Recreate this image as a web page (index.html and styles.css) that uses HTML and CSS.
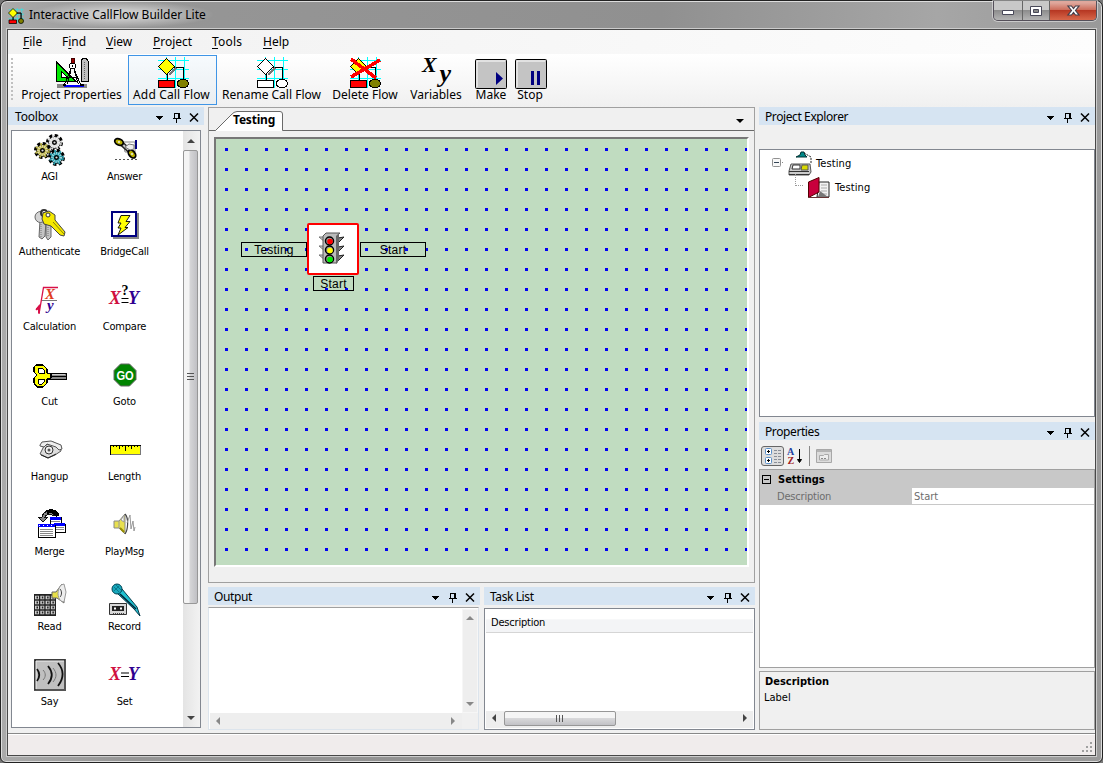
FILE: index.html
```html
<!DOCTYPE html>
<html lang="en">
<head>
<meta charset="utf-8">
<title>Interactive CallFlow Builder Lite</title>
<link rel="stylesheet" href="styles.css">
</head>
<body>
<svg class="defs" width="0" height="0">
  <symbol id="pane-tools" viewBox="0 0 46 11">
    <path d="M1 4h8l-4 4z" fill="#000"/>
    <path d="M20.500 1v5.500M20 1.500h5M24 1v5.500M25 1v5.500M18.500 6.500h8M22.500 7v4" fill="none" stroke="#000"/>
    <path d="M36 1.500l8 8M44 1.500l-8 8" stroke="#000" stroke-width="1.500" shape-rendering="auto"/>
  </symbol>
  <symbol id="gear" viewBox="0 0 16 16">
    <circle cx="8" cy="8" r="6.300" fill="none" stroke="#000" stroke-width="3.400" stroke-dasharray="2.900 2.050"/>
    <circle cx="8" cy="8" r="5.600" fill="currentColor" stroke="#000" stroke-width=".8"/>
    <circle cx="8" cy="8" r="6" fill="none" stroke="currentColor" stroke-width="2" stroke-dasharray="1.700 3.250" stroke-dashoffset="-.6"/>
    <circle cx="8" cy="8" r="4" fill="none" stroke="#fff" stroke-width="2.500" stroke-dasharray="1 1" opacity=".6"/>
    <circle cx="8" cy="8" r="1.700" fill="#ddd" stroke="#000" stroke-width="1.300"/>
  </symbol>
  <symbol id="flow-grid" viewBox="0 0 32 32">
    <path d="M9.500 0v31M18.500 0v31M27.500 0v31M1 3.500h31M1 12.500h31M1 21.500h31" stroke="#0ff" fill="none"/>
    <path d="M16 10.500h10.500v12M10.500 15v9" stroke="#000" fill="none"/>
  </symbol>
</svg>
<div class="window">
  <header class="titlebar">
    <svg class="app-icon" width="16" height="16" viewBox="0 0 32 32"><use href="#flow-grid"/><path d="M10 1l9 9-9 9-9-9z" fill="#ff0" stroke="#000" stroke-width="1.500"/><path d="M17 10h9v12M10 19v5" stroke="#000" stroke-width="2" fill="none"/><path d="M2 24h15v7H2z" fill="red" stroke="#000" stroke-width="1.500"/><circle cx="26" cy="26" r="5" fill="#808000" stroke="#000" stroke-width="1.500"/></svg>
    <span class="title-text">Interactive CallFlow Builder Lite</span>
    <div class="caption-buttons">
      <span class="cap min"><svg width="28" height="19"><path d="M8.500 9.500h11v4h-11z" fill="#fff" stroke="#484858"/></svg></span>
      <span class="cap max"><svg width="26" height="19"><path d="M7.500 5.500h11v9h-11z" fill="#fff" stroke="#484858"/><path d="M10.500 8.500h5v3h-5z" fill="#888" stroke="#484858"/></svg></span>
      <span class="cap close"><svg width="46" height="19"><path d="M18 5h3.500L23.500 7.500 25.500 5H29l-3.500 4.500L29 14h-3.500l-2-2.500-2 2.500H18l3.500-4.500z" fill="#fff" stroke="#45404c" stroke-width="1.200"/></svg></span>
    </div>
  </header>
  <div class="client">
    <nav class="menubar">
      <span class="m-file"><u>F</u>ile</span><span class="m-find">F<u>i</u>nd</span><span class="m-view"><u>V</u>iew</span><span class="m-project"><u>P</u>roject</span><span class="m-tools"><u>T</u>ools</span><span class="m-help"><u>H</u>elp</span>
    </nav>
    <div class="toolbar">
      <span class="grip"></span>
      <div class="tool t-props"><svg width="32" height="32" shape-rendering="crispEdges">
        <path d="M.500 5l19 19H.500z" fill="#00e800" stroke="#000"/><path d="M5 14l6 6H5z" fill="#fff" stroke="#000"/>
        <path d="M25 4l2-3h3l2 3v20h-7z" fill="#c0c0c0" stroke="#000"/><path d="M28.500 5v18" stroke="#666" stroke-dasharray="1 1"/>
        <path d="M15 1h3v5h-3z" fill="#900" stroke="#400"/><circle cx="16.500" cy="9" r="3" fill="#fff" stroke="#000"/><circle cx="16.500" cy="9" r="1" fill="#000"/>
        <path d="M15 12L7 31M18 12l8 19M15 13l-4 16M18 13l5 16M11 20h11" stroke="#000" fill="none"/>
        <path d="M1 28.500h30" stroke="#888" stroke-width="4"/><path d="M8 28h20" stroke="#00f" stroke-width="3"/><path d="M10 27.500h15" stroke="#fff"/><path d="M7 28h3M24 28h4" stroke="#000" stroke-width="2"/></svg><span>Project Properties</span></div>
      <div class="tool t-add selected"><svg width="32" height="32" shape-rendering="crispEdges"><use href="#flow-grid"/><path d="M12 18l7-7" stroke="#777" stroke-width="2"/><path d="M9.500 1.500l8 8-8 8-8-8z" fill="#ff0" stroke="#000"/><path d="M1.500 23.500h16v7h-16z" fill="red" stroke="#000"/><ellipse cx="26" cy="26.500" rx="5.500" ry="4.500" fill="#808000" stroke="#000"/></svg><span>Add Call Flow</span></div>
      <div class="tool t-rename"><svg width="32" height="32" shape-rendering="crispEdges"><use href="#flow-grid"/><path d="M12 18l7-7" stroke="#777" stroke-width="2"/><path d="M9.500 1.500l8 8-8 8-8-8z" fill="#fff" stroke="#000"/><path d="M1.500 23.500h16v7h-16z" fill="#fff" stroke="#000"/><ellipse cx="26" cy="26.500" rx="5.500" ry="4.500" fill="#fff" stroke="#000"/></svg><span>Rename Call Flow</span></div>
      <div class="tool t-delete"><svg width="32" height="32" shape-rendering="crispEdges"><use href="#flow-grid"/><path d="M9.500 1.500l8 8-8 8-8-8z" fill="#ff0" stroke="#000"/><path d="M1.500 23.500h16v7h-16z" fill="red" stroke="#000"/><ellipse cx="26" cy="26.500" rx="5.500" ry="4.500" fill="#808000" stroke="#000"/><path d="M2 2l25 19M31 3L2 20" stroke="red" stroke-width="3.500"/></svg><span>Delete Flow</span></div>
      <div class="tool t-vars"><svg width="32" height="32"><text class="var-glyph" x="0" y="15">X</text><text class="var-glyph big" x="17.500" y="25">y</text></svg><span>Variables</span></div>
      <div class="tool t-make"><svg width="32" height="32"><rect x=".5" y="2.500" width="31" height="29" rx="1" fill="#c4c4c4" stroke="#000"/><path d="M2 30V4h28" stroke="#fff" fill="none"/><path d="M21 15v13l7-6.500z" fill="#000080"/></svg><span>Make</span></div>
      <div class="tool t-stop"><svg width="32" height="32"><rect x=".5" y="2.500" width="31" height="29" rx="1" fill="#c4c4c4" stroke="#000"/><path d="M2 30V4h28" stroke="#fff" fill="none"/><path d="M16 14h3v14h-3zM22 14h3v14h-3z" fill="#000080"/></svg><span>Stop</span></div>
    </div>
    <main class="workspace">
      <section class="toolbox">
        <div class="pane-head"><span class="wide">Toolbox</span><svg width="46" height="11" shape-rendering="crispEdges"><use href="#pane-tools"/></svg></div>
        <div class="toolbox-list">
          <div class="items">
            <div class="item"><svg width="32" height="32"><use href="#gear" x="12" y="0" width="17" height="17" color="#d8d8d8"/><use href="#gear" x="0" y="8" width="17" height="17" color="#b8b040"/><use href="#gear" x="14" y="15" width="17" height="17" color="#209cac"/></svg><span>AGI</span></div>
            <div class="item"><svg width="32" height="32"><path d="M14 8h12v10H16z" fill="#fff" stroke="#888"/><path d="M27 6v9" stroke="#000080" stroke-width="2"/><path d="M13 10l9 8" stroke="#222" stroke-width="5"/><path d="M12 9l10 9" stroke="#c8c8c8" stroke-width="2"/><ellipse cx="10" cy="8" rx="4.500" ry="3" transform="rotate(25 10 8)" fill="#b8b000" stroke="#000" stroke-width="1.800"/><ellipse cx="23" cy="20" rx="4.500" ry="3" transform="rotate(50 23 20)" fill="#b8b000" stroke="#000" stroke-width="1.800"/><circle cx="10" cy="8" r="1" fill="#eee"/><circle cx="23" cy="20" r="1" fill="#eee"/><path d="M16 13l4-3 5 1v4l-4 1z" fill="#eee" stroke="#777"/><path d="M6 25.500h23" stroke="#555" stroke-dasharray="2 2"/></svg><span>Answer</span></div>
            <div class="item"><svg width="32" height="32"><g stroke="#666"><path d="M6 11l-1 17 3 2 3-3 1-15zM12 12v16l2 3 3-3V12z" fill="#c4c4c4"/><circle cx="6.500" cy="8" r="5.500" fill="#d4d4d4"/></g><circle cx="10" cy="4" r="3" fill="none" stroke="#333" stroke-width="2"/><path d="M9 4l6-2 6 4v5l10 12-1 4-4-1-9-9-7-2-2-5z" fill="#f4e800" stroke="#444"/><path d="M19 13l11 12" stroke="#8a8400"/><circle cx="14" cy="6" r="2" fill="#fff" stroke="#333"/><path d="M7 15v13M14 18v10" stroke="#777" stroke-dasharray="1 1"/></svg><span>Authenticate</span></div>
            <div class="item"><svg width="32" height="32"><path d="M4 4h26v26H4z" fill="#888"/><path d="M3 3h24v24H3z" fill="#fff" stroke="#000080" stroke-width="2"/><path d="M12 6.500h9l-4 6h4l-5 6h3L9 26l3-7H9l3-5H9z" fill="#ff0" stroke="#000" stroke-width=".9"/></svg><span>BridgeCall</span></div>
            <div class="item"><svg width="32" height="32"><path d="M2 26l3-4v8L9.500 3.500H24" stroke="#d81048" fill="none" stroke-width="1.300"/><path d="M2.500 25.500l2.500-2.500v6" stroke="#d81048" fill="none" stroke-width="2"/><text class="math red s16" x="11" y="14.500">X</text><path d="M8 16.500h15" stroke="#777"/><text class="math purple s16" x="13" y="26">y</text></svg><span>Calculation</span></div>
            <div class="item"><svg width="32" height="32"><text class="math crimson" x="0" y="20">X</text><path d="M12.500 14.500h7M12.500 18.500h7" stroke="#000" stroke-width="1.200"/><text class="math purple" x="19" y="20">Y</text><text class="question" x="12.500" y="11">?</text></svg><span>Compare</span></div>
            <div class="item"><svg width="32" height="32" shape-rendering="crispEdges"><path d="M14 14h18v6H14z" fill="#888" stroke="#000"/><path d="M15 15.500h16" stroke="#ccc"/><path d="M16 17.500h16" stroke="#000"/><path d="M2 6h7l4 4v4l4 1v4l-4 1v4l-4 4H3l-3-4v-5l3-3-3-3V8z" fill="#ff0" stroke="#000" stroke-width="1.200"/><path d="M5 9h3l2 2v3H5l-1-2zM5 20h5v3l-2 2H5l-1-2z" fill="#fff" stroke="#000"/></svg><span>Cut</span></div>
            <div class="item"><svg width="32" height="32"><path d="M11.500 5h9l6.500 6.500v9L20.500 27h-9L5 20.500v-9z" fill="#008400" stroke="#666"/><text class="go" x="7.500" y="20.500" textLength="17" lengthAdjust="spacingAndGlyphs">GO</text></svg><span>Goto</span></div>
            <div class="item"><svg width="32" height="32"><path d="M10 12l-4 8 8 4 7-3 6-4-1-5-7-4z" fill="#ddd" stroke="#555"/><path d="M6 11l2-3 9-1 10 4 1 4-3 1-3-3-9-3-3 3-4-1z" fill="#eee" stroke="#555"/><circle cx="15" cy="16" r="4" fill="#eee" stroke="#333"/><circle cx="15" cy="16" r="1.500" fill="#555"/><path d="M7 21l7 3 8-4" stroke="#222" fill="none"/></svg><span>Hangup</span></div>
            <div class="item"><svg width="32" height="32" shape-rendering="crispEdges"><path d="M1.500 11.500h30v9h-30z" fill="#ff0" stroke="#777"/><path d="M1.500 21V11.500h30" fill="none" stroke="#000"/><path d="M4 12.500h26" stroke="#000" stroke-dasharray="1 2"/><path d="M10.500 12v3M16.500 12v5M22.500 12v3" stroke="#000"/></svg><span>Length</span></div>
            <div class="item"><svg width="32" height="32" shape-rendering="crispEdges"><path d="M16 8h11v14H16z" fill="#fff" stroke="#000"/><path d="M16 9h11" stroke="#00f" stroke-width="3"/><path d="M20 15h11v8H20z" fill="#fff" stroke="#000"/><path d="M20 15h11" stroke="#00f" stroke-width="3"/><path d="M20 20.500h10M20 18.500h10M17 12.500h9" stroke="#888"/><path d="M4 16h17v12H4z" fill="#fff" stroke="#000"/><path d="M4 16h17" stroke="#00f" stroke-width="3"/><path d="M5 16.500h16" stroke="#fff" stroke-dasharray="1 3"/><path d="M6 20.500h13M6 22.500h13M6 24.500h13M6 26.500h13" stroke="#888"/><path d="M20 6c-4-5-10-5-12 2H4l5 5 5-5h-3c1-3 4-3 7-2z" fill="#888" stroke="#111"/><path d="M13 3c6-2 9 0 11 4" fill="none" stroke="#000" stroke-width="4"/></svg><span>Merge</span></div>
            <div class="item"><svg width="32" height="32"><path d="M5 12h5l6-7v20l-6-6H5z" fill="#e8e050" stroke="#888"/><path d="M10 12v7M12 11l3-5v7z" stroke="#999" fill="#fff"/><path d="M11 19l4 4" stroke="#998f00" stroke-width="2"/><path d="M16 5c4 4 3 16 0 20" fill="none" stroke="#444" stroke-width="1.200"/><path d="M18 14l3-8 1 14 2-8 1 10 1-4" fill="none" stroke="#999"/></svg><span>PlayMsg</span></div>
            <div class="item"><svg width="32" height="32"><path d="M0 10h22v22H0z" fill="#222"/><path d="M1 13.500h20M1 18.500h20M1 23.500h20M1 28.500h20" stroke="#ccc" stroke-width="3.500" stroke-dasharray="4 1.300"/><path d="M2.500 13.500h18M2.500 18.500h18M2.500 23.500h18M2.500 28.500h18" stroke="#222" stroke-width="2" stroke-dasharray="1.500 3.800"/><path d="M18 8h4l6-8 2 19-7-5h-5z" fill="#e8e048" stroke="#666"/><path d="M27 1l3-1 2 8-2 10-3-1c-4-4-4-11 0-16z" fill="#eee" stroke="#999"/><path d="M26 5c2 2 2 6 0 8" stroke="#444" fill="none"/></svg><span>Read</span></div>
            <div class="item"><svg width="32" height="32"><path d="M.5 19.500h17v11H.5z" fill="#d8d8d8" stroke="#333"/><path d="M3 22h12v5H3z" fill="#222"/><path d="M5 24.500h2M11 24.500h2" stroke="#fff" stroke-width="2"/><path d="M4 29.500h12" stroke="#444" stroke-dasharray="1 1"/><path d="M8 9l17 16 6 7-3-9L13 5z" fill="#20c0d0" stroke="#063848"/><path d="M11 10l16 15" stroke="#023" stroke-width="1.500"/><circle cx="8" cy="5" r="5" fill="#18a8bc" stroke="#045"/><path d="M5 3l5 5M7 1l5 5M10 2L5 7" stroke="#067" stroke-width=".7"/></svg><span>Record</span></div>
            <div class="item"><svg width="32" height="32"><path d="M0 0h32v32H0z" fill="#555"/><path d="M2 2h28v28H2z" fill="#c0c0c0"/><path d="M1 31V1h30" stroke="#222" fill="none"/><path d="M2 30V2h28" stroke="#eee" fill="none"/><path d="M3 10c3 4 3 8 0 12M14 7c5 6 5 12 0 18M24 4c6 7 6 15 0 23" fill="none" stroke="#111" stroke-width="1.800"/><path d="M9 11c3 3 3 7 0 10M19 9c4 5 4 9 0 14" fill="none" stroke="#777"/></svg><span>Say</span></div>
            <div class="item"><svg width="32" height="32"><text class="math crimson" x="0" y="21">X</text><path d="M12 14h8M12 17.500h8" stroke="#000" stroke-width="1.200"/><text class="math purple" x="19" y="21">Y</text></svg><span>Set</span></div>
          </div>
          <div class="vscroll"><i class="arr up"></i><div class="thumb"><i></i></div><i class="arr down"></i></div>
        </div>
      </section>
      <div class="center">
        <section class="document">
          <div class="tabstrip">
            <svg class="tab-shape" width="72" height="20"><path d="M0 19.500h3.500L19 4Q22 .5 25 .5h43Q70.500.500 70.500 3v17H3" fill="#fff"/><path d="M0 19.500h3.500L19 4Q22 .5 25 .5h43Q70.500.500 70.500 3v16.500" fill="none" stroke="#696969"/></svg>
            <span class="tab-label">Testing</span>
            <i class="menu-arrow"></i>
          </div>
          <div class="canvas">
            <div class="node-label left">Testing</div>
            <div class="node"><svg width="28" height="32"><path d="M1 5h6v5zM1 14h6v5zM1 23h6v5z" fill="#ccc" stroke="#777"/><path d="M26 5l-6 6V6zM26 14l-6 6v-5zM26 23l-6 6v-5z" fill="#888" stroke="#222"/><path d="M5 4l3-3h14l-3 3v27H5z" fill="#bbb" stroke="#555"/><path d="M18 4l3-3v27l-3 4z" fill="#666"/><g stroke="#000" stroke-width="1.500"><circle cx="11.500" cy="9" r="4" fill="#999"/><circle cx="11.500" cy="18" r="4" fill="#999"/><circle cx="11.500" cy="27" r="4" fill="#999"/></g><circle cx="12" cy="9.500" r="2.800" fill="red"/><circle cx="12" cy="18.500" r="2.800" fill="#ff0"/><circle cx="12" cy="27.500" r="2.800" fill="#0e0"/></svg></div>
            <div class="node-label right">Start</div>
            <div class="node-label below">Start</div>
          </div>
        </section>
        <div class="bottom-panes">
          <section class="output">
            <div class="pane-head"><span>Output</span><svg width="46" height="11" shape-rendering="crispEdges"><use href="#pane-tools"/></svg></div>
            <div class="output-box">
              <div class="vtrack"><i class="arr up"></i><i class="arr down"></i></div>
              <div class="htrack"><i class="arr lt"></i><i class="arr rt"></i></div>
            </div>
          </section>
          <section class="tasks">
            <div class="pane-head"><span>Task List</span><svg width="46" height="11" shape-rendering="crispEdges"><use href="#pane-tools"/></svg></div>
            <div class="task-box">
              <div class="task-head"><span>Description</span></div>
              <div class="hscroll"><i class="arr lt"></i><div class="hthumb"><i></i></div><i class="arr rt"></i></div>
            </div>
          </section>
        </div>
      </div>
      <aside class="side">
        <div class="pane-head"><span>Project Explorer</span><svg width="46" height="11" shape-rendering="crispEdges"><use href="#pane-tools"/></svg></div>
        <div class="tree">
          <div class="tree-row root"><svg class="expander" width="14" height="9"><rect x=".5" y=".5" width="8" height="8" rx="1" fill="#f8f8f8" stroke="#919191"/><path d="M2 4.500h5" stroke="#345"/><path d="M10 4.500h1" stroke="#888"/></svg>
            <svg width="24" height="24"><path d="M3 13h19l1 8-2 3H1v-4z" fill="#ccc" stroke="#555"/><path d="M1 20.500h20M1 23.500h20" stroke="#333"/><path d="M5 14h7v4H4z" fill="#fff" stroke="#333"/><path d="M14 14h6v5h-7z" fill="#d8d800" stroke="#555"/><path d="M13 1h3l1 3 2 2H8l4-2z" fill="#088" stroke="#033"/><path d="M16 2l7 4v7" stroke="#222" fill="none" stroke-dasharray="2 1"/></svg><span>Testing</span></div>
          <div class="tree-row child"><i class="branch"></i><svg width="22" height="22"><path d="M11 5h10v15H9z" fill="#f2f2f2" stroke="#222"/><path d="M13 8h6M13 11h6M13 14h6M13 17h6" stroke="#aaa"/><path d="M10 20l2-6 8 6z" fill="#777"/><path d="M.5 5L11 .5V15L.5 20.500z" fill="#c8003c" stroke="#500"/><path d="M1 20.500h20" stroke="#633"/></svg><span>Testing</span></div>
        </div>
        <div class="pane-head props-head"><span>Properties</span><svg width="46" height="11" shape-rendering="crispEdges"><use href="#pane-tools"/></svg></div>
        <div class="prop-tools">
          <span class="cat-btn"><svg width="18" height="18"><g fill="#fff" stroke="#5a8fc8"><rect x="1.500" y="1.500" width="6" height="6" rx="1"/><rect x="1.500" y="10.500" width="6" height="6" rx="1"/></g><path d="M3 4.500h3M4.500 3v3M3 13.500h3M4.500 12v3" stroke="#000"/><path d="M10 3.500h7M10 6.500h7M10 9.500h7M10 12.500h7M10 15.500h7" stroke="#8a8f98" stroke-dasharray="3 1"/></svg></span>
          <svg class="sort" width="16" height="18"><text class="az blue" x="0" y="8">A</text><text class="az darkred" x=".5" y="17">Z</text><path d="M12.500 2v11M12.500 15.500l-2-3h4z" stroke="#000" fill="#000"/></svg>
          <span class="tool-sep"></span>
          <svg width="16" height="16"><path d="M.5 1.500h15v13H.5z" fill="#dcdcdc" stroke="#a8a8a8"/><path d="M1 3h14" stroke="#b4b4b4" stroke-width="2"/><path d="M3.500 12V7.500h4l1-1h4V12z" fill="#eee" stroke="#aaa"/><path d="M5 10.500h6" stroke="#888" stroke-dasharray="2 1"/></svg>
        </div>
        <div class="grid">
          <div class="category"><svg width="9" height="9"><rect x=".5" y=".5" width="8" height="8" fill="none" stroke="#000"/><path d="M2 4.500h5" stroke="#000"/></svg><span>Settings</span></div>
          <div class="property"><span class="pname">Description</span><span class="pvalue">Start</span></div>
        </div>
        <div class="help"><b>Description</b><span>Label</span></div>
      </aside>
    </main>
    <footer class="statusbar"><svg width="11" height="11"><path d="M8 0h2v2H8zM4 4h2v2H4zM8 4h2v2H8zM0 8h2v2H0zM4 8h2v2H4zM8 8h2v2H8z" fill="#a0a0a0"/></svg></footer>
  </div>
</div>
</body>
</html>
```

FILE: styles.css
```css
* { box-sizing: border-box; }
html, body { margin: 0; height: 100%; overflow: hidden; background: #777; }
body { font: 11px/14px "DejaVu Sans Condensed", "DejaVu Sans", sans-serif; font-stretch: condensed; color: #000; }
svg { display: block; flex: none; overflow: visible; }
.defs { position: absolute; }
.window { width: 1103px; height: 763px; border: 1px solid #222; border-radius: 7px 7px 6px 6px; display: flex; flex-direction: column; padding: 0 6px 6px; background: linear-gradient(90deg, #aaa 0, #969696 12%, #909090 60%, #a6a6a6 85%, #999 100%); box-shadow: inset 0 0 0 1px #ddd; }
.titlebar { height: 28px; flex: none; display: flex; align-items: flex-start; padding-left: 1px; }
.app-icon { margin-top: 7px; }
.title-text { font: 12px/26px "Noto Sans", sans-serif; margin-left: 5px; padding: 1px 8px 0 0; letter-spacing: 0; background: radial-gradient(closest-side, rgba(255,255,255,.5) 30%, rgba(255,255,255,0)); }
.caption-buttons { margin-left: auto; margin-right: -1px; display: flex; height: 20px; border: 1px solid #55505a; border-top: 0; border-radius: 0 0 5px 5px; box-shadow: 0 0 0 1px rgba(255,255,255,.45); overflow: hidden; }
.cap { border-right: 1px solid #666; background: linear-gradient(#c8c8c8 0 45%, #8a8a8a 46%, #b4b4b4); }
.cap.close { border-right: 0; background: linear-gradient(#dfa79c 0 10%, #cd6f5d 45%, #b43420 46%, #d8674a); }
.client { width: 1089px; height: 727px; flex: none; border: 1px solid #484848; box-shadow: 0 0 0 1px #ccc; display: flex; flex-direction: column; background: #f0f0f0; }
.menubar { height: 24px; flex: none; display: flex; font: 12px/24px "Noto Sans", sans-serif; padding-left: 15px; background: linear-gradient(90deg, #f1f1f1, #fdfdfd); }
.menubar u { text-underline-offset: 2px; }
.m-file { width: 39px; } .m-find { width: 44px; } .m-view { width: 47px; } .m-project { width: 59px; } .m-tools { width: 51px; letter-spacing: .2px; }
.toolbar { height: 53px; flex: none; display: flex; padding-top: 1px; background: linear-gradient(#fff, #f0f0f0); font: 12px/14px "Noto Sans", sans-serif; }
.grip { width: 2px; height: 44px; margin: 3px 4px 0 3px; background: repeating-linear-gradient(#c0c0c0 0 2px, transparent 2px 4px); }
.tool { height: 50px; display: flex; flex-direction: column; align-items: center; padding-top: 2px; white-space: nowrap; }
.tool span { margin-top: -1px; }
.t-props { width: 109px; margin-right: 2px; }
.t-add { width: 89px; }
.t-add span { letter-spacing: .15px; margin-right: 2px; }
.selected { border: 1px solid #3f95e6; padding-top: 1px; background: rgba(190,220,250,.12); }
.t-rename { width: 109px; } .t-delete { width: 78px; } .t-vars { width: 64px; margin-right: 3px; } .t-make { width: 40px; } .t-stop { width: 40px; }
.t-stop span { margin-right: 2px; }
.t-vars svg { margin-left: 4px; }
.var-glyph { font: italic bold 22px "Liberation Serif", serif; }
.var-glyph.big { font-size: 26px; }
.workspace { height: 626px; flex: none; display: grid; grid-template-columns: 196px 547px 336px; column-gap: 4px; }
.pane-head { height: 18px; flex: none; background: #d6e4f2; display: flex; justify-content: space-between; align-items: center; padding: 2px 4px 0 6px; font: 12px/16px "Noto Sans", sans-serif; letter-spacing: -.4px; }
.pane-head .wide { letter-spacing: -.2px; padding-left: 1px; }
.toolbox { display: flex; flex-direction: column; }
.toolbox-list { width: 190px; height: 598px; margin: 5px 0 0 3px; border: 1px solid #828790; background: #fff; display: flex; }
.items { width: 171px; flex: none; display: grid; grid-template-columns: 75px 75px; grid-auto-rows: 75px; }
.item { display: flex; flex-direction: column; align-items: center; padding-top: 3px; letter-spacing: -.2px; }
.item span { margin-top: 4px; }
.vscroll { width: 17px; background: linear-gradient(90deg, #e4e4e4, #f2f2f2); display: flex; flex-direction: column; align-items: flex-start; }
.arr { width: 0; height: 0; border: 4px solid transparent; flex: none; }
.up { border-bottom-color: #444; border-top: 0; border-width: 0 4px 4px; }
.down { border-width: 4px 4px 0; border-top-color: #444; }
.lt { border-width: 4px 4px 4px 0; border-right-color: #444; }
.rt { border-width: 4px 0 4px 4px; border-left-color: #444; }
.vscroll .up { margin: 8px 0 7px 4px; }
.vscroll .down { margin: auto 0 7px 4px; }
.thumb { width: 15px; height: 454px; border: 1px solid #979797; border-radius: 2px; background: linear-gradient(90deg, #f4f4f4 0 35%, #d4d4d6 50%, #c0c0c4); display: flex; align-items: center; justify-content: center; }
.thumb i { width: 7px; height: 8px; background: repeating-linear-gradient(#555 0 1px, transparent 1px 3px); }
.center { display: flex; flex-direction: column; }
.document { height: 476px; border: 1px solid #a0a0a0; }
.tabstrip { height: 23px; border-bottom: 1px solid #696969; display: grid; grid-template-columns: 3px 72px 1fr 18px; align-items: end; }
.tab-shape { grid-area: 1 / 2; margin-bottom: -1px; }
.tab-label { grid-area: 1 / 2; padding: 0 0 1px 21px; font: bold 12px/19px "Noto Sans", sans-serif; letter-spacing: -.2px; z-index: 1; }
.menu-arrow { grid-column: 4; width: 0; height: 0; border: 4px solid transparent; border-top-color: #000; border-bottom: 0; margin-bottom: 7px; }
.canvas {
  width: 535px; height: 430px; margin: 6px 0 0 5px; position: relative; overflow: hidden;
  border: 2px solid; border-color: #777 #fff #fff #777;
  font: 12px/15px "Liberation Sans", sans-serif; letter-spacing: .2px; text-align: center;
  background:
    linear-gradient(90deg, #c0dcc0 9px, transparent 9px 12px, #c0dcc0 12px) 0 0 / 20px 20px,
    linear-gradient(#c0dcc0 9px, #0000f0 9px 12px, #c0dcc0 12px) 0 0 / 20px 20px;
}
.node, .node-label { position: absolute; }
.node-label { border: 1px solid #000; height: 15px; }
.left { left: 25px; top: 103px; width: 66px; }
.right { left: 144px; top: 103px; width: 66px; }
.below { left: 97px; top: 137px; width: 41px; }
.node { left: 91px; top: 84px; width: 52px; height: 52px; border: 2px solid red; background: #fff; padding: 7px 0 0 9px; border-radius: 2px; }
.bottom-panes { display: grid; grid-template-columns: 272px 271px; column-gap: 4px; margin-top: 4px; }
.output-box { width: 271px; height: 123px; margin-top: 2px; border: 1px solid #dce4ec; border-top: 1px solid #a0a0a0; background: #fff; padding: 1px; display: grid; grid-template: 104px 16px / 252px 16px; }
.vtrack { grid-column: 2; background: #eee; border: 1px solid #f6f6f6; display: flex; flex-direction: column; align-items: center; justify-content: space-between; padding: 6px 0; }
.htrack { grid-column: 1; grid-row: 2; background: #eee; display: flex; align-items: center; justify-content: space-between; padding: 0 7px 0 6px; }
.output .arr { opacity: .6; }
.output-box::after { content: ""; grid-area: 2 / 2; background: #f0f0f0; }
.task-box { height: 122px; margin-top: 3px; border: 1px solid #828790; background: #fff; padding: 1px; display: flex; flex-direction: column; justify-content: space-between; }
.task-head { height: 23px; border-bottom: 1px solid #d5d5d5; padding: 6px 5px 0; letter-spacing: -.2px; background: linear-gradient(#fff 40%, #f3f4f6 45%); }
.hscroll { height: 17px; background: #eee; display: flex; align-items: flex-start; padding: 0 6px; }
.hscroll .arr { margin-top: 3px; }
.hthumb { width: 112px; height: 15px; margin: 0 auto 0 8px; border: 1px solid #979797; border-radius: 2px; background: linear-gradient(#f5f5f5 0 48%, #d8d8da 50%, #c2c2c6); display: flex; align-items: center; justify-content: center; }
.hthumb i { width: 8px; height: 7px; background: repeating-linear-gradient(90deg, #555 0 1px, transparent 1px 3px); }
.side { display: flex; flex-direction: column; }
.tree { height: 268px; margin-top: 24px; border: 1px solid #828790; background: #fff; flex: none; letter-spacing: .1px; }
.tree-row { height: 24px; display: flex; align-items: center; }
.tree-row > span { margin-left: 5px; padding-top: 2px; }
.root { padding: 1px 0 0 12px; }
.root > span { margin-left: 4px; }
.root > svg:nth-child(2) { margin-left: 2px; }
.child { padding-left: 35px; }
.child > span { padding-top: 3px; }
.child svg { margin-left: 5px; margin-top: 3px; }
.branch { width: 8px; height: 12px; border: dotted #999; border-width: 0 0 1px 1px; margin-bottom: 12px; }
.props-head { margin-top: 5px; }
.prop-tools { height: 29px; flex: none; display: flex; align-items: center; padding: 2px 0 0 2px; }
.cat-btn { width: 23px; height: 20px; border: 1px solid #666; border-radius: 3px; background: #ddd; padding: 0 2px; }
.sort { margin-left: 3px; }
.az { font: bold 10px "Liberation Serif", serif; }
.blue { fill: #2040a0; } .darkred { fill: #a02020; }
.tool-sep { width: 1px; height: 20px; background: #888; margin: 0 6px; }
.grid { height: 199px; flex: none; border: 1px solid #a0a0a0; background: #fff; }
.category { height: 18px; background: #c8c8c8; display: flex; align-items: center; padding-left: 2px; font-weight: bold; }
.category span { margin-left: 7px; padding-top: 1px; }
.property { height: 17px; display: grid; grid-template-columns: 152px 1fr; background: #c8c8c8; color: #6d6d6d; line-height: 18px; letter-spacing: -.2px; }
.pname { padding-left: 17px; }
.pvalue { background: #fff; padding-left: 2px; height: 16px; letter-spacing: 0; }
.help { height: 59px; margin-top: 3px; border: 1px solid #a0a0a0; padding: 3px 5px; display: flex; flex-direction: column; gap: 2px; }
.help span { margin-left: -1px; }
.statusbar { flex: 1; border-top: 1px solid #888; box-shadow: inset 0 1px #fff; background: #f0ecec; display: flex; justify-content: flex-end; align-items: flex-end; padding: 0 2px 2px; }
.math { font: italic bold 18px "Liberation Serif", serif; }
.math.s16 { font-size: 15px; }
.red { fill: #e03c20; } .crimson { fill: #d01040; } .purple { fill: #300090; }
.question { font: bold 14px "Liberation Serif", serif; }
.go { font: bold 13px "Liberation Sans", sans-serif; fill: #fff; }
```
